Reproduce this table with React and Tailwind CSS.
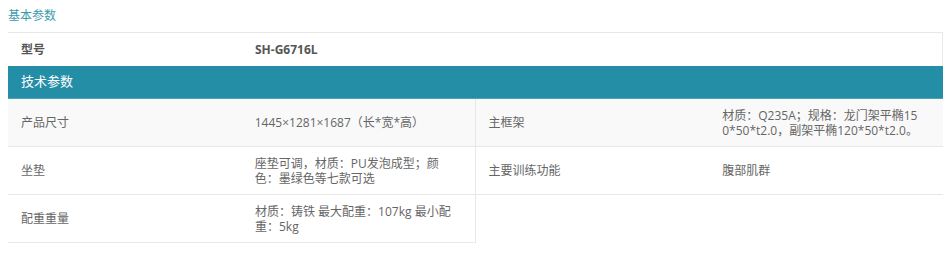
import React from 'react';

const font = { fontFamily: '"Open Sans", "Noto Sans CJK SC", sans-serif' };

const specs = [
  [
    { label: '产品尺寸', value: '1445×1281×1687（长*宽*高）' },
    { label: '主框架', value: '材质：Q235A；规格：龙门架平椭15\n0*50*t2.0，副架平椭120*50*t2.0。' },
  ],
  [
    { label: '坐垫', value: '座垫可调，材质：PU发泡成型；颜\n色：墨绿色等七款可选' },
    { label: '主要训练功能', value: '腹部肌群' },
  ],
  [{ label: '配重重量', value: '材质：铸铁 最大配重：107kg 最小配\n重：5kg' }],
];

const Cell = ({ children, divider }) => (
  <div className={`w-[234px] flex items-center px-[13px] leading-[15px] ${divider ? 'border-r border-[#e8e8e8]' : ''}`}>
    <div className="whitespace-pre-line">{children}</div>
  </div>
);

export default function App() {
  return (
    <div className="bg-white w-[950px] h-[254px] px-2 text-[12px] text-[#666]" style={font}>
      <div className="h-8 flex items-center text-[#3a9bb0]">基本参数</div>

      <div className="w-[935px]">
        {/* model row */}
        <div className="flex h-[34px] items-center border-t border-r border-[#e8e8e8] text-[#555] font-bold">
          <div className="w-[234px] px-[13px]">型号</div>
          <div className="px-[13px]">SH-G6716L</div>
        </div>

        {/* section header */}
        <div className="h-[33px] flex items-center px-[13px] bg-[#258ea7] border-b border-[#4ea3b3] text-white text-[13px]">
          技术参数
        </div>

        {specs.map((row, i) => (
          <div key={i} className={`flex h-[48px] ${i === 0 ? 'bg-[#f9f9f9]' : 'bg-white'}`}>
            <div
              className={`flex border-b border-[#e8e8e8] ${row.length === 2 ? 'w-full' : 'w-[468px]'}`}
            >
              {row.map((item, j) => (
                <React.Fragment key={j}>
                  <Cell>{item.label}</Cell>
                  <Cell divider={j === 0}>{item.value}</Cell>
                </React.Fragment>
              ))}
            </div>
          </div>
        ))}
      </div>
    </div>
  );
}
